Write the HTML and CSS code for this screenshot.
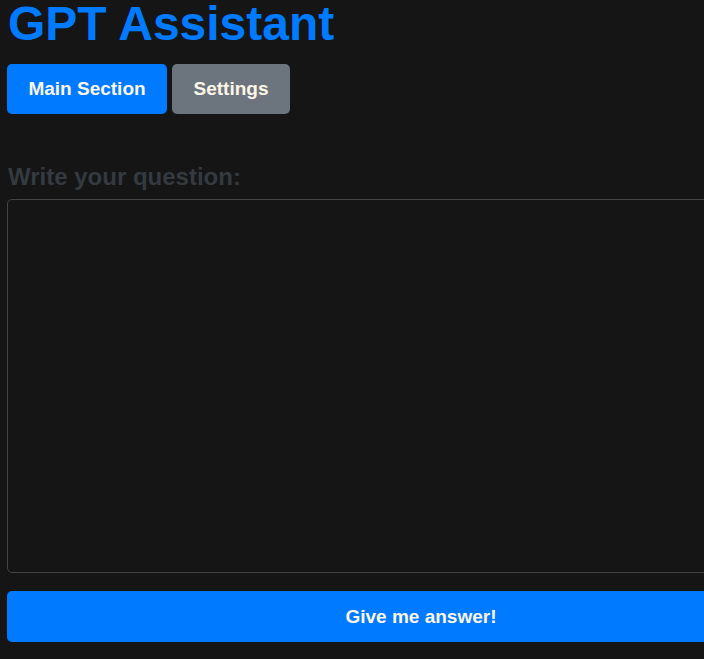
FILE: index.html
```html
<!DOCTYPE html>
<html lang="en">
<head>
<meta charset="utf-8">
<title>GPT Assistant</title>
<link rel="stylesheet" href="styles.css">
</head>
<body>
<div class="page">
  <h1 class="title">GPT Assistant</h1>
  <nav class="tabs">
    <button class="tab tab-active">Main Section</button>
    <button class="tab tab-muted">Settings</button>
  </nav>
  <section class="main">
    <label class="question-label" for="q">Write your question:</label>
    <textarea id="q" class="question"></textarea>
    <button class="submit">Give me answer!</button>
  </section>
</div>
</body>
</html>
```
FILE: styles.css
```css
html, body {
  margin: 0;
  padding: 0;
  background: #151515;
  overflow: hidden;
}
body {
  font-family: "Liberation Sans", Arial, sans-serif;
}
.page {
  padding: 0 7px;
}
.title {
  margin: 0;
  font-size: 48px;
  line-height: 48px;
  font-weight: bold;
  color: #007bff;
  padding-left: 1px;
}
.tabs {
  display: flex;
  gap: 5px;
  margin-top: 16px;
}
.tab {
  height: 50px;
  border: none;
  border-radius: 5px;
  font-family: "Liberation Sans", Arial, sans-serif;
  font-size: 19px;
  font-weight: bold;
  color: #fdf5e6;
  padding: 0 10px;
}
.tab-active {
  background: #007bff;
  width: 160px;
}
.tab-muted {
  background: #6c757d;
  width: 118px;
}
.main {
  display: flex;
  flex-direction: column;
  align-items: flex-start;
  margin-top: 49px;
}
.question-label {
  font-size: 24px;
  font-weight: bold;
  color: #343a40;
  line-height: 28px;
  padding-left: 1px;
}
.question {
  box-sizing: border-box;
  margin-top: 8px;
  width: 828px;
  height: 374px;
  background: #151515;
  border: 1px solid #444;
  border-radius: 5px;
  resize: none;
  color: #fdf5e6;
}
.submit {
  margin-top: 18px;
  width: 828px;
  height: 51px;
  border: none;
  border-radius: 5px;
  background: #007bff;
  color: #fdf5e6;
  font-family: "Liberation Sans", Arial, sans-serif;
  font-size: 19px;
  font-weight: bold;
}
```
